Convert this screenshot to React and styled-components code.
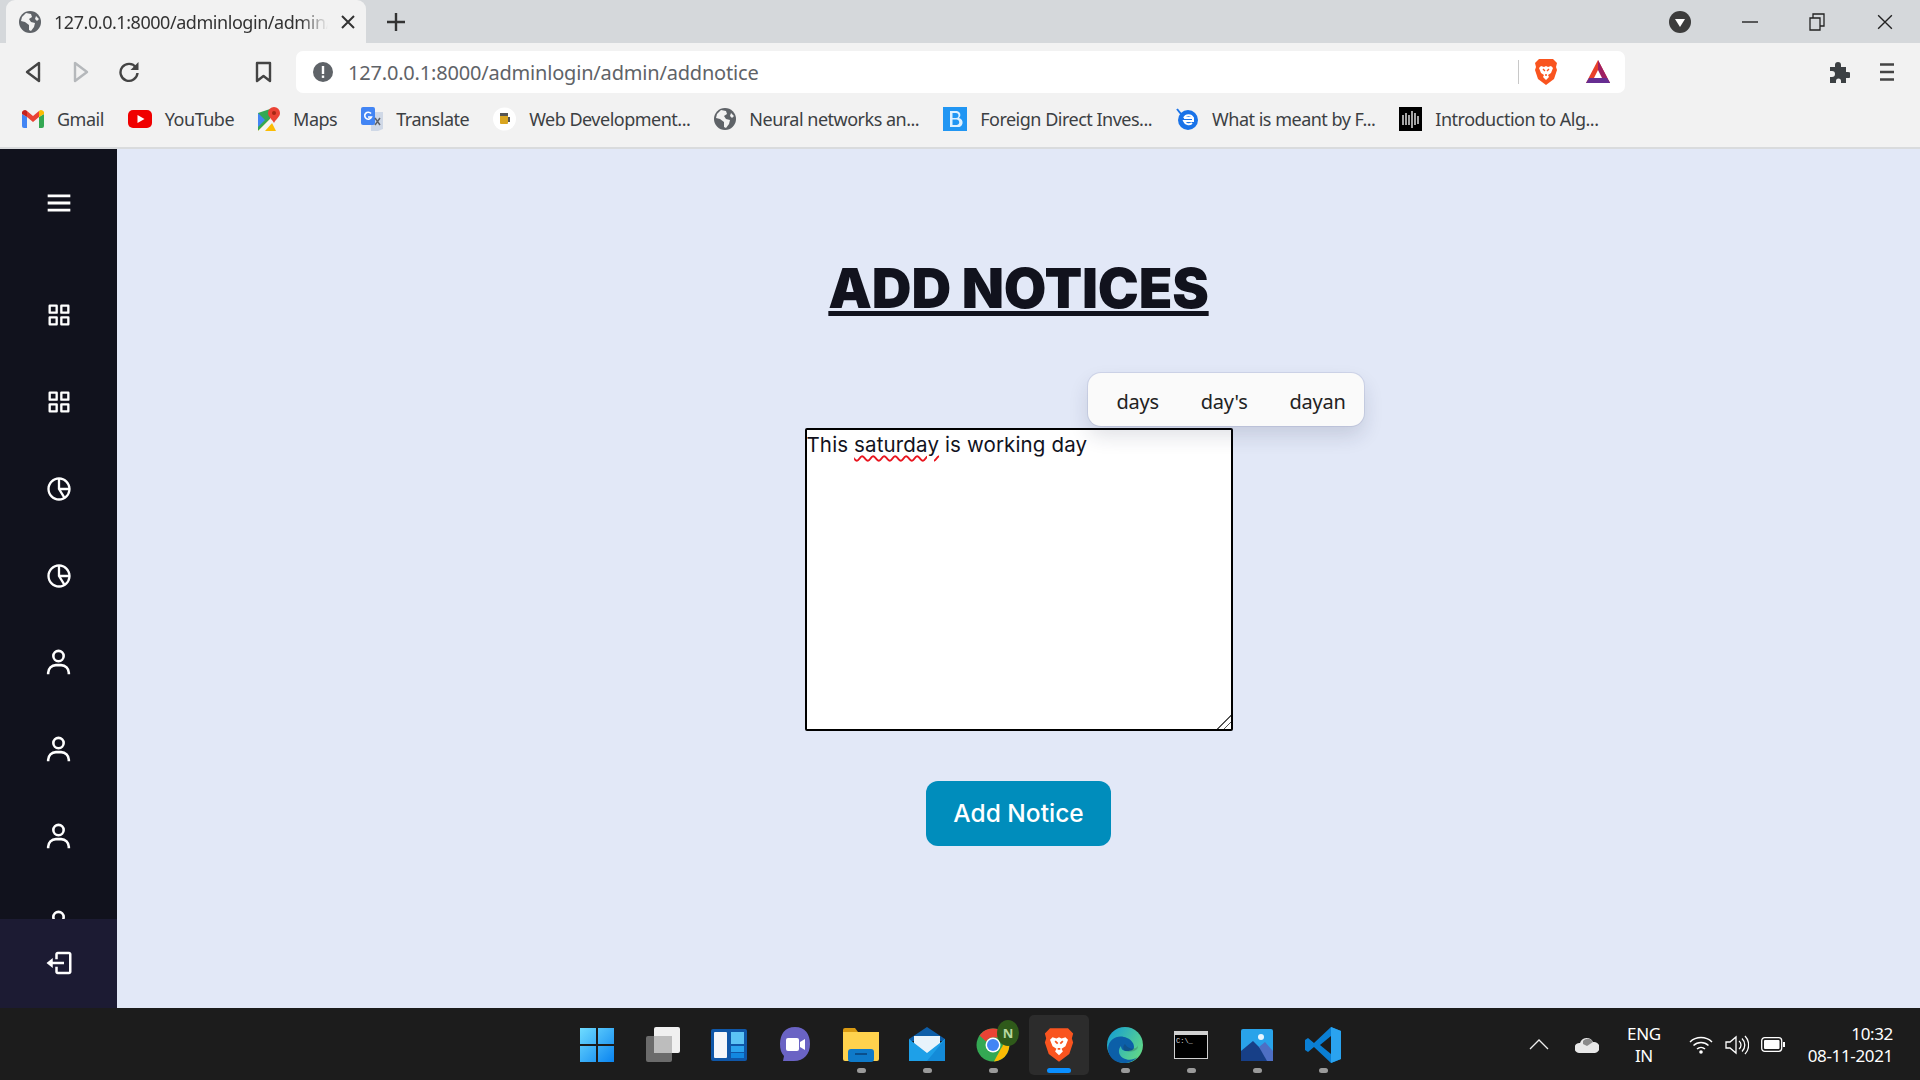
import React from 'react'
import styled, { createGlobalStyle } from 'styled-components'
import { BiMenu, BiGridAlt, BiPieChartAlt2, BiUser, BiLogOut } from 'react-icons/bi'

const GlobalStyle = createGlobalStyle`
    html, body { margin: 0; padding: 0; height: 100%; overflow: hidden; }
    body { font-family: "Noto Sans", "Open Sans", sans-serif; }
    * { box-sizing: border-box; }
`

const Page = styled.div`
    width: 1920px;
    height: 1080px;
    display: flex;
    flex-direction: column;
    overflow: hidden;
`

/* browser chrome */
const TabStrip = styled.div`
    height: 43px;
    flex: none;
    display: flex;
    align-items: center;
    padding-left: 6px;
    background: #d5d8db;
`
const Tab = styled.div`
    width: 360px;
    height: 43px;
    display: flex;
    align-items: center;
    padding: 0 11px 0 13px;
    gap: 13px;
    background: #f2f2f2;
    border-radius: 9px 9px 0 0;
`
const TabTitle = styled.div`
    flex: 1;
    overflow: hidden;
    white-space: nowrap;
    font-size: 18px;
    letter-spacing: -0.45px;
    color: #333;
    -webkit-mask-image: linear-gradient(to right, #000 90%, transparent 100%);
    mask-image: linear-gradient(to right, #000 90%, transparent 100%);
`
const NewTab = styled.div`
    margin-left: 21px;
    display: flex;
`
const WinControls = styled.div`
    margin-left: auto;
    display: flex;
`
const WinCell = styled.div`
    width: ${(p) => p.$w || 67}px;
    height: 43px;
    display: flex;
    align-items: center;
    justify-content: center;
`
const Toolbar = styled.div`
    height: 50px;
    flex: none;
    display: flex;
    align-items: flex-start;
    padding: 8px 9px 0;
    background: #f2f2f2;
`
const ToolCell = styled.div`
    width: 48px;
    height: 42px;
    display: flex;
    align-items: center;
    justify-content: center;
    margin-left: ${(p) => p.$ml || 0}px;
`
const AddressBar = styled.div`
    width: 1329px;
    height: 42px;
    margin-left: 9px;
    display: flex;
    align-items: center;
    padding: 0 14px 0 16px;
    background: #fff;
    border-radius: 7px;
`
const Url = styled.div`
    margin-left: 14px;
    font-size: 20px;
    letter-spacing: -0.19px;
    color: #5f6368;
    white-space: nowrap;
`
const UrlDivider = styled.div`
    width: 1px;
    height: 24px;
    margin-left: auto;
    margin-right: 15px;
    background: #c8c8c8;
`
const AddressIcon = styled.div`
    display: flex;
    margin-right: 27px;
`
const ToolEnd = styled.div`
    margin-left: auto;
    display: flex;
`
const BookmarkBar = styled.div`
    height: 56px;
    flex: none;
    display: flex;
    align-items: center;
    gap: 24px;
    padding: 0 0 2px 22px;
    background: #f2f2f2;
    border-bottom: 2px solid #d9dbdd;
`
const Bookmark = styled.div`
    display: flex;
    align-items: center;
    gap: 13px;
    font-size: 18px;
    letter-spacing: -0.5px;
    color: #3c4043;
    white-space: nowrap;
`

/* the admin page */
const Body = styled.div`
    flex: 1;
    min-height: 0;
    display: flex;
`
const Sidebar = styled.aside`
    width: 117px;
    flex: none;
    display: flex;
    flex-direction: column;
    background: #11121d;
    color: #fff;
`
const SideNav = styled.nav`
    flex: 1;
    min-height: 0;
    overflow: hidden;
`
const MenuButton = styled.div`
    height: 108px;
    margin-bottom: 14px;
    display: flex;
    align-items: center;
    justify-content: center;
    font-size: 34px;
`
const SideItem = styled.div`
    height: 87px;
    display: flex;
    align-items: center;
    justify-content: center;
    font-size: ${(p) => p.$size || 28}px;
`
const LogoutRow = styled.div`
    height: 89px;
    flex: none;
    display: flex;
    align-items: center;
    justify-content: center;
    padding-bottom: 2px;
    font-size: 30px;
    background: #1c1b33;
`
const Main = styled.main`
    flex: 1;
    display: flex;
    flex-direction: column;
    align-items: center;
    background: #e2e8f7;
`
const Title = styled.h1`
    margin: 106px 0 0;
    font-family: Inter, "Noto Sans", sans-serif;
    font-size: 55px;
    line-height: 66px;
    font-weight: 900;
    letter-spacing: -0.2px;
    color: #11121d;
    text-decoration: underline;
    text-decoration-thickness: 5px;
    text-underline-offset: 3px;
`
const EditorWrap = styled.div`
    position: relative;
    margin-top: 107px;
`
const NoticeBox = styled.div`
    width: 428px;
    height: 303px;
    padding-top: 1px;
    border: 2px solid #000;
    border-radius: 2px;
    background: #fff;
    overflow: auto;
    resize: both;
    font-family: Inter, "Noto Sans", sans-serif;
    font-size: 20.5px;
    line-height: 28px;
    letter-spacing: 0.14px;
    color: #11121d;
    &::-webkit-resizer {
        background: linear-gradient(135deg, transparent 52%, #555 52%, #555 58%, transparent 58%, transparent 74%, #555 74%, #555 80%, transparent 80%);
    }
`
const Misspelt = styled.span`
    text-decoration: underline wavy #e8141e 1.7px;
    text-underline-offset: 3px;
`
const Suggestions = styled.div`
    position: absolute;
    left: 283px;
    top: -55px;
    width: 276px;
    height: 53px;
    display: flex;
    align-items: center;
    gap: 42px;
    padding: 3px 0 0 29px;
    background: #fafafa;
    border-radius: 13px;
    box-shadow: 0 0 0 1px rgba(120, 125, 170, 0.18), 0 10px 20px rgba(30, 35, 70, 0.14);
    font-size: 20px;
    letter-spacing: -0.25px;
    color: #222;
`
const AddButton = styled.button`
    width: 185px;
    height: 65px;
    margin-top: 50px;
    padding: 0 0 2px;
    border: 0;
    border-radius: 12px;
    background: #008dbc;
    color: #fff;
    font-family: Inter, "Noto Sans", sans-serif;
    font-size: 24.5px;
    font-weight: 500;
`

/* windows taskbar */
const Taskbar = styled.footer`
    height: 72px;
    flex: none;
    display: grid;
    grid-template-columns: 1fr auto 1fr;
    padding-top: 7px;
    background: #1c1c1c;
    color: #fff;
`
const TaskApps = styled.div`
    grid-column: 2;
    display: flex;
    gap: 6px;
`
const TaskApp = styled.div`
    width: 60px;
    height: 60px;
    display: flex;
    flex-direction: column;
    align-items: center;
    padding-top: 12px;
    border-radius: 5px;
    background: ${(p) => (p.$active ? '#2c2c2c' : 'transparent')};
`
const RunDot = styled.span`
    width: ${(p) => (p.$active ? 24 : 9)}px;
    height: 5px;
    margin-top: 5px;
    border-radius: 3px;
    background: ${(p) => (p.$active ? '#0a8fff' : p.$off ? 'transparent' : '#9a9a9a')};
`
const Tray = styled.div`
    grid-column: 3;
    height: 59px;
    display: flex;
    align-items: center;
    justify-content: flex-end;
    padding-right: 27px;
`
const TrayIcon = styled.div`
    display: flex;
    margin-right: ${(p) => p.$mr || 0}px;
`
const TrayText = styled.div`
    text-align: ${(p) => p.$align || 'center'};
    margin-right: ${(p) => p.$mr || 0}px;
    font-size: 17px;
    line-height: 22px;
    letter-spacing: -0.35px;
    white-space: nowrap;
`

/* drawings */
const Globe = ({ size = 22 }) => (
    <svg width={size} height={size} viewBox="0 0 22 22">
        <circle cx="11" cy="11" r="11" fill="#5f6368" />
        <path d="M7 2l5 1 1 3-3 2 2 3 4 1-1 4-3 4-2-1v-5l-4-3-4-1 1-4zM17 5l3 3-2 2-2-2z" fill="#f2f2f2" />
    </svg>
)
const Cross = ({ size = 14, w = 2, c = '#333' }) => (
    <svg width={size} height={size} viewBox="0 0 14 14">
        <path d="M1 1l12 12M13 1L1 13" stroke={c} strokeWidth={w} fill="none" />
    </svg>
)
const Plus = () => (
    <svg width="18" height="18" viewBox="0 0 18 18">
        <path d="M9 0v18M0 9h18" stroke="#333" strokeWidth="2.4" />
    </svg>
)
const ProfileDot = () => (
    <svg width="22" height="22" viewBox="0 0 22 22">
        <circle cx="11" cy="11" r="11" fill="#3c3c3c" />
        <path d="M6 8h10l-5 8z" fill="#fff" />
    </svg>
)
const Minimize = () => (
    <svg width="16" height="16" viewBox="0 0 16 16"><path d="M0 8h16" stroke="#222" strokeWidth="1.4" /></svg>
)
const Restore = () => (
    <svg width="16" height="18" viewBox="0 0 16 18">
        <path d="M1 5h10v12H1zM4 5V1h11v12h-4" fill="none" stroke="#222" strokeWidth="1.3" />
    </svg>
)
const Back = ({ c = '#444', flip }) => (
    <svg width="18" height="22" viewBox="0 0 18 22" style={flip ? { transform: 'scaleX(-1)' } : undefined}>
        <path d="M15 2v18L3 11z" fill="none" stroke={c} strokeWidth="2.4" strokeLinejoin="round" />
    </svg>
)
const Reload = () => (
    <svg width="22" height="22" viewBox="0 0 22 22">
        <path d="M18 6.5A8.5 8.5 0 1 0 19.5 12" fill="none" stroke="#444" strokeWidth="2.4" />
        <path d="M20.5 1v8h-8z" fill="#444" />
    </svg>
)
const BookmarkIcon = () => (
    <svg width="17" height="22" viewBox="0 0 17 22">
        <path d="M2 2h13v18l-6.500-5L2 20z" fill="none" stroke="#444" strokeWidth="2.400" strokeLinejoin="round" />
    </svg>
)
const InfoIcon = () => (
    <svg width="22" height="22" viewBox="0 0 22 22">
        <circle cx="11" cy="11" r="10" fill="#5f6368" />
        <rect x="9.800" y="5" width="2.400" height="8" fill="#fff" />
        <rect x="9.800" y="14.500" width="2.400" height="2.400" fill="#fff" />
    </svg>
)
const BraveIcon = ({ w = 24, h = 28 }) => (
    <svg width={w} height={h} viewBox="0 0 24 28">
        <path d="M5 1h14l4 4-1 4 1 3-3 9-8 6-8-6-3-9 1-3-1-4z" fill="#f9541f" />
        <path d="M7 8l3 1 2-1 2 1 3-1 2 2-2 5-3 2 1 2-3 3-3-3 1-2-3-2-2-5z" fill="#fff" />
        <path d="M9 11l2 2M15 11l-2 2M11 17h2" stroke="#f9541f" strokeWidth="1.400" />
    </svg>
)
const BatIcon = () => (
    <svg width="26" height="26" viewBox="0 0 26 26">
        <path d="M13 1L1 24h24z" fill="#e8402a" />
        <path d="M13 1l12 23h-8l-4-12z" fill="#9e1f63" />
        <path d="M1 24h24l-3-5H4z" fill="#662d91" />
        <path d="M13 11l-4 8h8z" fill="#fff" />
    </svg>
)
const Puzzle = () => (
    <svg width="22" height="22" viewBox="0 0 22 22">
        <path d="M2 6h5V4a3 3 0 0 1 6 0v2h5v5h2a3 3 0 0 1 0 6h-2v5H13v-2a2.500 2.500 0 0 0-5 0v2H2v-6h2a3 3 0 0 0 0-6H2z" fill="#3c4043" />
    </svg>
)
const Kebab = () => (
    <svg width="14" height="18" viewBox="0 0 14 18">
        <path d="M0 1.500h14M0 9h14M0 16.500h14" stroke="#444" strokeWidth="2.400" />
    </svg>
)
const Gmail = () => (
    <svg width="22" height="18" viewBox="0 0 22 18">
        <path d="M0 4v12a2 2 0 0 0 2 2h3V7z" fill="#4285f4" />
        <path d="M22 4v12a2 2 0 0 1-2 2h-3V7z" fill="#34a853" />
        <path d="M5 7l6 5 6-5V1l-6 5-6-5z" fill="#ea4335" />
        <path d="M0 4a3 3 0 0 1 5-3v6L0 4z" fill="#c5221f" />
        <path d="M22 4a3 3 0 0 0-5-3v6l5-3z" fill="#fbbc04" />
    </svg>
)
const YouTube = () => (
    <svg width="24" height="18" viewBox="0 0 24 18">
        <rect width="24" height="18" rx="5" fill="#f00000" />
        <path d="M9.500 5v8l7-4z" fill="#fff" />
    </svg>
)
const Maps = () => (
    <svg width="22" height="24" viewBox="0 0 22 24">
        <path d="M0 6l12-4v22H0z" fill="#34a853" />
        <path d="M0 24l12-12 6 12z" fill="#fbbc04" />
        <path d="M0 24l12-12 3 3-8 9z" fill="#f4f4f4" />
        <path d="M0 6l7 7-7 7z" fill="#4285f4" />
        <path d="M16 0a6 6 0 0 1 6 6c0 4-4 6-6 10-2-4-6-6-6-10a6 6 0 0 1 6-6z" fill="#ea4335" />
        <circle cx="16" cy="6" r="2" fill="#a52714" />
    </svg>
)
const Translate = () => (
    <svg width="22" height="24" viewBox="0 0 22 24">
        <path d="M10 5h12v17l-5 2H10z" fill="#cfd8e6" />
        <rect width="14" height="18" rx="2" fill="#4285f4" />
        <path d="M10 6.500A3.500 3.500 0 1 0 10.500 10H7" fill="none" stroke="#fff" strokeWidth="1.600" />
        <path d="M14 11l5 7M19 11l-5 7" stroke="#5f6368" strokeWidth="1.500" />
    </svg>
)
const Beer = () => (
    <svg width="23" height="24" viewBox="0 0 23 24">
        <circle cx="11.500" cy="12" r="11.500" fill="#fff" />
        <rect x="7" y="7" width="8" height="10" rx="1" fill="#d9a520" />
        <rect x="7" y="6" width="8" height="3" fill="#555" />
        <rect x="15" y="10" width="2" height="5" fill="#555" />
    </svg>
)
const BingB = () => (
    <svg width="24" height="24" viewBox="0 0 24 24">
        <rect width="24" height="24" fill="#2196f3" />
        <path d="M7 4h7a4 4 0 0 1 2 7 4.500 4.500 0 0 1-2 9H7zM9.500 6v5H13a2.500 2.500 0 0 0 0-5zM9.500 12.500V18H14a2.800 2.800 0 0 0 0-5.500z" fill="#dff1ff" fillRule="evenodd" />
    </svg>
)
const EduE = () => (
    <svg width="23" height="24" viewBox="0 0 23 24">
        <path d="M1 2l4 5" stroke="#1a73e8" strokeWidth="2" />
        <circle cx="12" cy="13" r="10" fill="#1a73e8" />
        <path d="M17 11H8M8 11a5 5 0 0 1 9 0v3H8a5 5 0 0 0 8 2" fill="none" stroke="#fff" strokeWidth="2" />
    </svg>
)
const AlgoIcon = () => (
    <svg width="23" height="24" viewBox="0 0 23 24">
        <rect width="23" height="24" fill="#000" />
        <path d="M4 8v10M7 6v12M10 8v10M13 4v17M16 6v12M19 9v8" stroke="#fff" strokeWidth="1.300" />
    </svg>
)
const WinLogo = () => (
    <svg width="36" height="36" viewBox="0 0 36 36">
        <defs>
            <linearGradient id="wl" x1="0" y1="0" x2="1" y2="1">
                <stop offset="0" stopColor="#6fdcff" />
                <stop offset="1" stopColor="#0a84f0" />
            </linearGradient>
        </defs>
        <path d="M1 1h16v16H1zM19 1h16v16H19zM1 19h16v16H1zM19 19h16v16H19z" fill="url(#wl)" />
    </svg>
)
const TaskView = () => (
    <svg width="36" height="36" viewBox="0 0 36 36">
        <rect x="9" y="0" width="26" height="26" rx="2" fill="#f0f0f0" />
        <rect x="1" y="9" width="26" height="26" rx="2" fill="#6b6b6b" />
        <rect x="9" y="9" width="18" height="17" fill="#bdbdbd" />
    </svg>
)
const Widgets = () => (
    <svg width="36" height="36" viewBox="0 0 36 36">
        <rect y="2" width="36" height="32" rx="2" fill="#0f57a8" />
        <rect x="3" y="5" width="13" height="26" rx="1" fill="#f5f7fa" />
        <rect x="20" y="5" width="13" height="12" fill="#5cc4f5" />
        <rect x="20" y="19" width="13" height="6" fill="#2ba4ee" />
        <rect x="20" y="26" width="13" height="5" fill="#1288e0" />
    </svg>
)
const Chat = () => (
    <svg width="36" height="36" viewBox="0 0 36 36">
        <path d="M18 0c10 0 15 7 15 17s-6 17-16 17H6l1-5C4 26 3 22 3 17 3 7 8 0 18 0z" fill="#6a63c4" />
        <rect x="9" y="11" width="13" height="13" rx="2" fill="#fff" />
        <path d="M23 15l5-3v11l-5-3z" fill="#fff" />
    </svg>
)
const Folder = () => (
    <svg width="36" height="36" viewBox="0 0 36 36">
        <path d="M0 3a2 2 0 0 1 2-2h10l3 4H0z" fill="#d99a12" />
        <path d="M0 5h36v27a2 2 0 0 1-2 2H2a2 2 0 0 1-2-2z" fill="#ffd24d" />
        <rect x="5" y="22" width="26" height="13" rx="3" fill="#0f7ac9" />
        <rect x="12" y="26" width="12" height="2" fill="#0a4f8c" />
    </svg>
)
const Mail = () => (
    <svg width="36" height="36" viewBox="0 0 36 36">
        <path d="M0 12L18 0l18 12v2H0z" fill="#0d5ea8" />
        <path d="M5 9h26v12L18 28 5 21z" fill="#e8f3fb" />
        <path d="M0 12l18 14 18-14v22H0z" fill="#1ea0e8" />
        <path d="M36 12v22H18z" fill="#0f82d2" opacity="0.700" />
    </svg>
)
const ChromeN = () => (
    <svg width="36" height="36" viewBox="0 0 36 36" overflow="visible">
        <circle cx="18" cy="18" r="16.500" fill="#34a853" />
        <path d="M18 1.500a16.500 16.500 0 0 1 14.500 9H18a8 8 0 0 0-7 4L4.500 8.500a16.500 16.500 0 0 1 13.500-7z" fill="#ea4335" />
        <path d="M32.500 10.500a16.500 16.500 0 0 1-13.500 24l7-13a8 8 0 0 0 0-11z" fill="#fbbc04" />
        <circle cx="18" cy="18" r="7.500" fill="#fff" />
        <circle cx="18" cy="18" r="6" fill="#4285f4" />
        <ellipse cx="33" cy="6" rx="11" ry="13" fill="#2f5a1a" />
        <text x="33" y="10.500" textAnchor="middle" fontSize="13" fontWeight="700" fill="#b8d8a0" fontFamily="Noto Sans, sans-serif">N</text>
    </svg>
)
const Edge = () => (
    <svg width="36" height="36" viewBox="0 0 36 36">
        <defs>
            <linearGradient id="eg" x1="0" y1="0" x2="1" y2="0.600">
                <stop offset="0" stopColor="#0f9ad8" />
                <stop offset="1" stopColor="#5fd68a" />
            </linearGradient>
        </defs>
        <circle cx="18" cy="18" r="18" fill="url(#eg)" />
        <path d="M1 21C2 11 12 7 20 11c5 2 7 6 7 9 0 3-3 4-7 4-4 0-6-2-6-5-3 3-3 9 2 12 5 3 11 2 14-1-3 4-8 6-13 6C8 36 1 30 1 21z" fill="#0c5fa8" />
        <path d="M18 17a5 5 0 0 0-1 6c2 2 5 2 10 1 3-1 4-3 4-5v-1c0 4-9 6-13-1z" fill="#1c1c1c" opacity="0.200" />
    </svg>
)
const Terminal = () => (
    <svg width="36" height="36" viewBox="0 0 36 36">
        <rect x="1" y="4" width="34" height="28" fill="#d0d0d0" />
        <rect x="2" y="8" width="32" height="23" fill="#000" />
        <text x="3" y="16" fontSize="7" fill="#ddd" fontFamily="Liberation Mono, monospace">C:\_</text>
    </svg>
)
const Photos = () => (
    <svg width="36" height="36" viewBox="0 0 36 36">
        <rect x="2" y="2" width="32" height="32" rx="2" fill="#29a3ea" />
        <circle cx="22" cy="10" r="3" fill="#e8f6ff" />
        <path d="M2 34V24l12-10 20 20z" fill="#173f87" />
        <path d="M20 20l6-5 8 9v10H28z" fill="#4e6fc4" />
    </svg>
)
const VSCode = () => (
    <svg width="36" height="36" viewBox="0 0 36 36">
        <path d="M26 0l10 4v28l-10 4L9 20l-6 5-3-2v-10l3-2 6 5z" fill="#0a7fd4" />
        <path d="M26 9L15 18l11 9z" fill="#1c1c1c" />
        <path d="M26 0l10 4v28l-10 4z" fill="#2aa3ef" />
    </svg>
)
const Chevron = () => (
    <svg width="20" height="11" viewBox="0 0 20 11"><path d="M1 10l9-9 9 9" fill="none" stroke="#eee" strokeWidth="1.300" /></svg>
)
const Cloud = () => (
    <svg width="24" height="17" viewBox="0 0 24 17">
        <path d="M5 7a7 7 0 0 1 13-1 5.500 5.500 0 0 1 2 11H4a4 4 0 0 1 1-10z" fill="#e8e8e8" />
        <path d="M8 5a6 6 0 0 1 10 1l-6 4-4-2z" fill="#8a8a8a" />
    </svg>
)
const Wifi = () => (
    <svg width="24" height="18" viewBox="0 0 24 18">
        <path d="M1 6a16 16 0 0 1 22 0M4.500 9.500a11 11 0 0 1 15 0M8 13a6 6 0 0 1 8 0" fill="none" stroke="#fff" strokeWidth="1.500" />
        <circle cx="12" cy="16" r="1.800" fill="#fff" />
    </svg>
)
const Speaker = () => (
    <svg width="24" height="20" viewBox="0 0 24 20">
        <path d="M1 7h4l6-5v16l-6-5H1z" fill="none" stroke="#fff" strokeWidth="1.300" />
        <path d="M14 6a5 5 0 0 1 0 8M17 3.500a9 9 0 0 1 0 13M20 1a13 13 0 0 1 0 18" fill="none" stroke="#fff" strokeWidth="1.300" />
    </svg>
)
const Battery = () => (
    <svg width="24" height="15" viewBox="0 0 24 15">
        <rect x="0.700" y="0.700" width="20" height="13.600" rx="3" fill="none" stroke="#fff" strokeWidth="1.300" />
        <rect x="3" y="3" width="15.500" height="9" rx="1" fill="#fff" />
        <rect x="22" y="5" width="2" height="5" fill="#fff" />
    </svg>
)

const bookmarks = [
    [Gmail, 'Gmail'],
    [YouTube, 'YouTube'],
    [Maps, 'Maps'],
    [Translate, 'Translate'],
    [Beer, 'Web Development...'],
    [Globe, 'Neural networks an...'],
    [BingB, 'Foreign Direct Inves...'],
    [EduE, 'What is meant by F...'],
    [AlgoIcon, 'Introduction to Alg...'],
]

const sideIcons = [
    [BiGridAlt, 28],
    [BiGridAlt, 28],
    [BiPieChartAlt2, 28],
    [BiPieChartAlt2, 28],
    [BiUser, 31],
    [BiUser, 31],
    [BiUser, 31],
    [BiUser, 31],
]

const taskApps = [
    [WinLogo, { off: true }],
    [TaskView, { off: true }],
    [Widgets, { off: true }],
    [Chat, { off: true }],
    [Folder, {}],
    [Mail, {}],
    [ChromeN, {}],
    [() => <BraveIcon w={32} h={36} />, { active: true }],
    [Edge, {}],
    [Terminal, {}],
    [Photos, {}],
    [VSCode, {}],
]

const App = () => (
    <Page>
        <GlobalStyle />
        <TabStrip>
            <Tab>
                <Globe />
                <TabTitle>127.0.0.1:8000/adminlogin/admin/addnotice</TabTitle>
                <Cross />
            </Tab>
            <NewTab><Plus /></NewTab>
            <WinControls>
                <WinCell $w={72}><ProfileDot /></WinCell>
                <WinCell><Minimize /></WinCell>
                <WinCell><Restore /></WinCell>
                <WinCell $w={70}><Cross size={16} w={1.2} c="#222" /></WinCell>
            </WinControls>
        </TabStrip>
        <Toolbar>
            <ToolCell><Back /></ToolCell>
            <ToolCell><Back c="#b5b8bb" flip /></ToolCell>
            <ToolCell><Reload /></ToolCell>
            <ToolCell $ml={86}><BookmarkIcon /></ToolCell>
            <AddressBar>
                <InfoIcon />
                <Url>127.0.0.1:8000/adminlogin/admin/addnotice</Url>
                <UrlDivider />
                <AddressIcon><BraveIcon /></AddressIcon>
                <BatIcon />
            </AddressBar>
            <ToolEnd>
                <ToolCell><Puzzle /></ToolCell>
                <ToolCell><Kebab /></ToolCell>
            </ToolEnd>
        </Toolbar>
        <BookmarkBar>
            {bookmarks.map(([Icon, label]) => (
                <Bookmark key={label}>
                    <Icon />
                    {label}
                </Bookmark>
            ))}
        </BookmarkBar>
        <Body>
            <Sidebar>
                <SideNav>
                    <MenuButton><BiMenu /></MenuButton>
                    {sideIcons.map(([Icon, size], i) => (
                        <SideItem key={i} $size={size}><Icon /></SideItem>
                    ))}
                </SideNav>
                <LogoutRow><BiLogOut /></LogoutRow>
            </Sidebar>
            <Main>
                <Title>ADD NOTICES</Title>
                <EditorWrap>
                    <NoticeBox>
                        This <Misspelt>saturday</Misspelt> is working day
                    </NoticeBox>
                    <Suggestions>
                        <span>days</span>
                        <span>day's</span>
                        <span>dayan</span>
                    </Suggestions>
                </EditorWrap>
                <AddButton>Add Notice</AddButton>
            </Main>
        </Body>
        <Taskbar>
            <TaskApps>
                {taskApps.map(([Icon, state], i) => (
                    <TaskApp key={i} $active={state.active}>
                        <Icon />
                        <RunDot $active={state.active} $off={state.off} />
                    </TaskApp>
                ))}
            </TaskApps>
            <Tray>
                <TrayIcon $mr={26}><Chevron /></TrayIcon>
                <TrayIcon $mr={28}><Cloud /></TrayIcon>
                <TrayText $mr={28}>ENG<br />IN</TrayText>
                <TrayIcon $mr={12}><Wifi /></TrayIcon>
                <TrayIcon $mr={12}><Speaker /></TrayIcon>
                <TrayIcon $mr={23}><Battery /></TrayIcon>
                <TrayText $align="right">10:32<br />08-11-2021</TrayText>
            </Tray>
        </Taskbar>
    </Page>
)

export default App
